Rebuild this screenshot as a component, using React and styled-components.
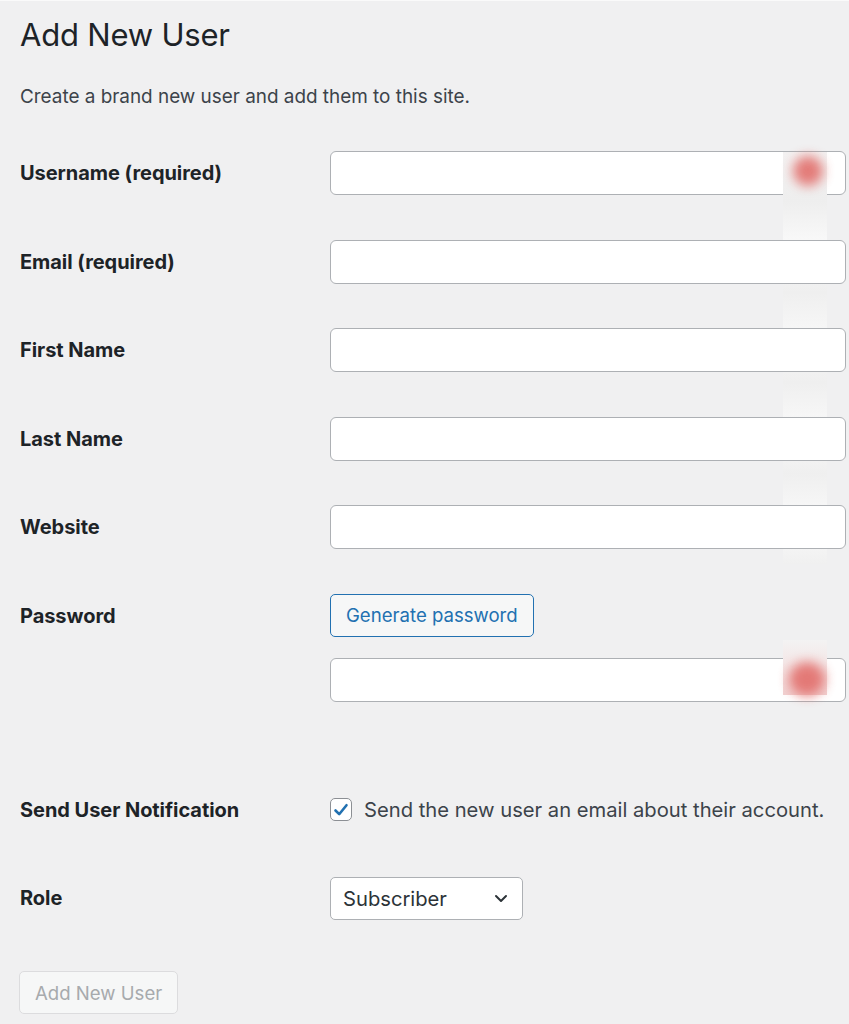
import React from 'react';
import styled, { createGlobalStyle } from 'styled-components';

const GlobalStyle = createGlobalStyle`
  html, body {
    margin: 0;
    padding: 0;
    background: #f0f0f1;
  }
  body {
    font-family: Inter, "Liberation Sans", Arial, sans-serif;
    color: #1d2327;
    border-top: 1px solid #fafafa;
  }
`;

const Wrap = styled.div`
  padding: 0 3px 0 20px;
`;

const Title = styled.h1`
  margin: 0;
  padding-top: 14px;
  font-size: 31px;
  font-weight: 400;
  line-height: 40px;
  letter-spacing: -0.2px;
  color: #1d2327;
`;

const Intro = styled.p`
  margin: 29px 0 0;
  font-size: 18.9px;
  line-height: 26px;
  color: #3c434a;
`;

const Form = styled.div`
  margin-top: 41px;
  display: flex;
  flex-direction: column;
`;

const Row = styled.div`
  display: grid;
  grid-template-columns: 310px 516px;
  align-items: center;
  min-height: 44px;
  margin-bottom: ${p => p.$gap ?? 44.5}px;
`;

const Label = styled.div`
  font-size: 20px;
  font-weight: 700;
  color: #1d2327;
  letter-spacing: -0.05px;
`;

const Field = styled.div`
  position: relative;
  display: flex;
  flex-direction: column;
  gap: 21px;
`;

const Input = styled.div`
  position: relative;
  height: 44px;
  box-sizing: border-box;
  background: #fff;
  border: 1.5px solid #adb0b4;
  border-radius: 6px;
`;

/* blurred password-manager badge lying over the inputs */
const Smudge = styled.div`
  position: absolute;
  right: 19px;
  top: ${p => p.$top}px;
  width: 44px;
  height: ${p => p.$h}px;
  background: ${p => p.$bg};
  pointer-events: none;
`;

const RedDot = styled.div`
  position: absolute;
  left: 10px;
  top: ${p => p.$top}px;
  width: ${p => p.$w || 30}px;
  height: ${p => p.$h || 30}px;
  border-radius: 50%;
  background: #e26f6c;
  filter: blur(6px);
  opacity: 0.9;
`;

const Button = styled.button`
  align-self: flex-start;
  height: 43px;
  padding: 0 15px;
  font-family: inherit;
  font-size: 18.6px;
  border-radius: 5px;
  background: #f6f7f7;
  border: 1.5px solid ${p => (p.$disabled ? '#dcdcde' : '#2271b1')};
  color: ${p => (p.$disabled ? '#a7aaad' : '#2271b1')};
  cursor: ${p => (p.$disabled ? 'default' : 'pointer')};
`;

const CheckLine = styled.label`
  display: flex;
  align-items: center;
  gap: 12px;
  font-size: 20.2px;
  color: #3c434a;
  white-space: nowrap;
`;

const Box = styled.span`
  width: 22px;
  height: 23px;
  flex: none;
  box-sizing: border-box;
  border: 1.5px solid #8c8f94;
  border-radius: 5px;
  background: #fff;
  display: flex;
  align-items: center;
  justify-content: center;
`;

const Select = styled.div`
  width: 193px;
  height: 43px;
  box-sizing: border-box;
  display: flex;
  align-items: center;
  justify-content: space-between;
  padding: 0 13px 0 12px;
  background: #fff;
  border: 1.5px solid #adb0b4;
  border-radius: 5px;
  font-size: 20.2px;
  color: #2c3338;
`;

const Footer = styled.div`
  margin-top: 51px;
  margin-left: -1px;
`;

const fields = ['Username (required)', 'Email (required)', 'First Name', 'Last Name', 'Website'];

const App = () => (
  <>
    <GlobalStyle />
    <Wrap>
      <Title>Add New User</Title>
      <Intro>Create a brand new user and add them to this site.</Intro>
      <Form>
        {fields.map((f, i) => (
          <Row key={f}>
            <Label>{f}</Label>
            <Field>
              <Input />
              {i === 0 && (
                <Smudge $top={1} $h={412} $bg="linear-gradient(#f3f1f1 0%, #eeeeee 12%, #f9f9f9 22%, #efefef 34%, #f8f8f8 45%, #efefef 56%, #fafafa 68%, #efefef 78%, #fafafa 90%, #f0f0f0 100%)">
                  <RedDot $top={4} />
                </Smudge>
              )}
            </Field>
          </Row>
        ))}
        <Row $gap={86}>
          <Label style={{ alignSelf: 'start', marginTop: 10 }}>Password</Label>
          <Field>
            <Button>Generate password</Button>
            <Input>
              <Smudge $top={-19} $h={55} $bg="linear-gradient(#f3f3f3 0%, #f4e8e8 40%, #f1d0d0 100%)" style={{ right: 18 }}>
                <RedDot $top={22} $w={36} $h={34} style={{ left: 6 }} />
              </Smudge>
            </Input>
          </Field>
        </Row>
        <Row>
          <Label>Send User Notification</Label>
          <CheckLine>
            <Box>
              <svg width="16" height="16" viewBox="0 0 16 16">
                <path d="M2.5 8.5 L6.2 12.2 L13.5 3.2" fill="none" stroke="#2271b1" strokeWidth="2.6" strokeLinecap="round" strokeLinejoin="round" />
              </svg>
            </Box>
            Send the new user an email about their account.
          </CheckLine>
        </Row>
        <Row $gap={0}>
          <Label>Role</Label>
          <Select>
            Subscriber
            <svg width="16" height="16" viewBox="0 0 16 16">
              <path d="M3 6 L8 11 L13 6" fill="none" stroke="#2c3338" strokeWidth="2" strokeLinecap="round" strokeLinejoin="round" />
            </svg>
          </Select>
        </Row>
      </Form>
      <Footer>
        <Button $disabled>Add New User</Button>
      </Footer>
    </Wrap>
  </>
);

export default App;
